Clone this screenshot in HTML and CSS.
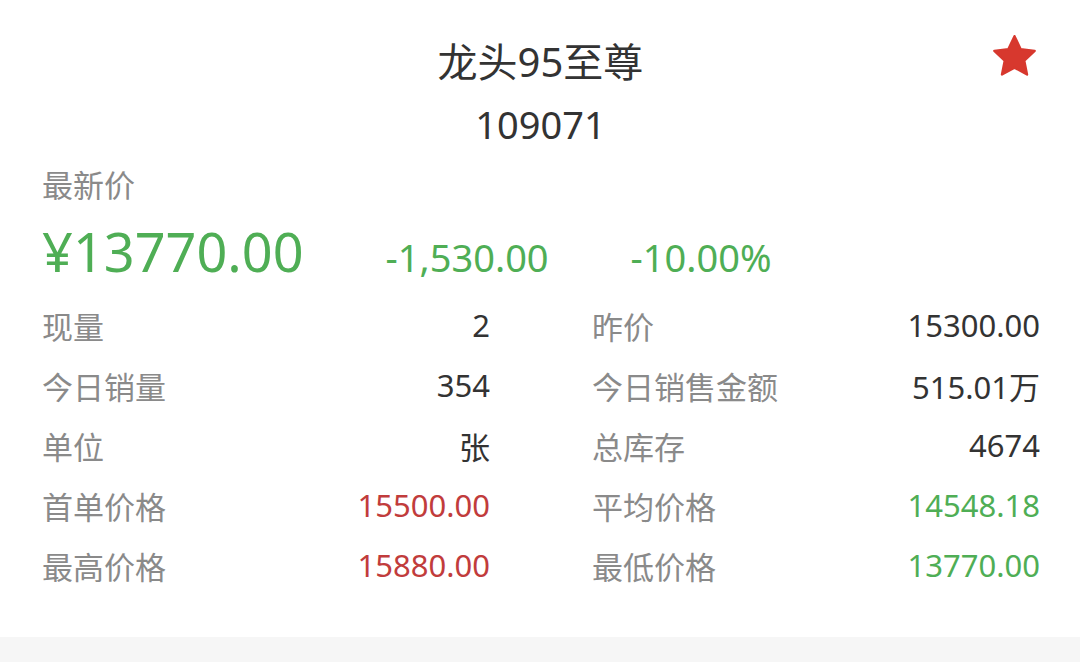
FILE: index.html
```html
<!DOCTYPE html>
<html lang="zh-CN">
<head>
    <meta charset="utf-8">
    <meta name="viewport" content="width=device-width, initial-scale=1.0">
    <title>龙头95至尊</title>
    <link rel="stylesheet" href="styles.css">
</head>
<body>
    <div class="card">
        <div class="header">
            <h1>龙头95至尊</h1>
            <div class="code">109071</div>
            <svg class="star" viewBox="0 0 24 24" aria-hidden="true">
                <path d="M12 1.6l3.1 6.6 7.2.9-5.3 5 1.4 7.1L12 17.7l-6.4 3.5 1.4-7.1-5.3-5 7.2-.9z" fill="#d7382e" stroke="#d7382e" stroke-width="1.2" stroke-linejoin="round"/>
            </svg>
        </div>

        <div class="label-top">最新价</div>
        <div class="price-row">
            <span class="price">¥13770.00</span>
            <span class="change">-1,530.00</span>
            <span class="change">-10.00%</span>
        </div>

        <div class="stats">
            <div class="stat"><span class="name">现量</span><span class="val">2</span></div>
            <div class="stat"><span class="name">昨价</span><span class="val">15300.00</span></div>
            <div class="stat"><span class="name">今日销量</span><span class="val">354</span></div>
            <div class="stat"><span class="name">今日销售金额</span><span class="val">515.01万</span></div>
            <div class="stat"><span class="name">单位</span><span class="val">张</span></div>
            <div class="stat"><span class="name">总库存</span><span class="val">4674</span></div>
            <div class="stat"><span class="name">首单价格</span><span class="val up">15500.00</span></div>
            <div class="stat"><span class="name">平均价格</span><span class="val down">14548.18</span></div>
            <div class="stat"><span class="name">最高价格</span><span class="val up">15880.00</span></div>
            <div class="stat"><span class="name">最低价格</span><span class="val down">13770.00</span></div>
        </div>
    </div>
    <div class="footer-band"></div>
</body>
</html>
```

FILE: styles.css
```css
body {
    margin: 0;
    background: #f6f6f6;
    font-family: "Noto Sans", "Noto Sans CJK SC", sans-serif;
    color: #333;
}
.card {
    background: #fff;
    padding: 31px 41px 42px 42px;
}
.header {
    position: relative;
    text-align: center;
}
.header h1 {
    margin: 0;
    font-size: 40px;
    font-weight: 400;
    line-height: 62px;
    color: #333;
}
.code {
    font-size: 38px;
    line-height: 62px;
    color: #333;
}
.star {
    position: absolute;
    top: 2px;
    right: 1px;
    width: 47px;
    height: 47px;
}
.label-top {
    font-size: 31px;
    line-height: 60px;
    color: #8a8a8a;
}
.price-row {
    display: flex;
    align-items: baseline;
    gap: 82px;
    height: 80px;
    line-height: 72px;
    color: #4fae55;
}
.price {
    font-size: 54px;
}
.change {
    font-size: 38px;
}
.stats {
    display: grid;
    grid-template-columns: 448px 448px;
    column-gap: 102px;
}
.stat {
    display: flex;
    justify-content: space-between;
    align-items: center;
    height: 60px;
    font-size: 31px;
}
.stat .name { color: #8a8a8a; }
.stat .val { color: #333; }
.stat .val.up { color: #c13c3c; }
.stat .val.down { color: #4fae55; }
.footer-band {
    height: 25px;
    background: #f6f6f6;
}
```
